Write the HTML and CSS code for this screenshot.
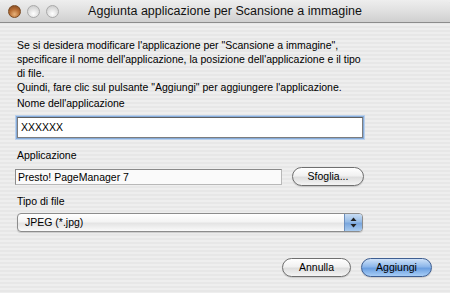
FILE: index.html
```html
<!DOCTYPE html>
<html lang="it">
<head>
<meta charset="utf-8">
<title>Aggiunta applicazione per Scansione a immagine</title>
<link rel="stylesheet" href="styles.css">
</head>
<body>
<div class="window">
  <div class="titlebar">
    <div class="lights">
      <span class="light light-close"></span>
      <span class="light"></span>
      <span class="light"></span>
    </div>
    <div class="title">Aggiunta applicazione per Scansione a immagine</div>
    <div></div>
  </div>
  <div class="content">
    <p class="intro">Se si desidera modificare l'applicazione per "Scansione a immagine",<br>specificare il nome dell'applicazione, la posizione dell'applicazione e il tipo<br>di file.<br>Quindi, fare clic sul pulsante "Aggiungi" per aggiungere l'applicazione.</p>

    <div class="label label-name">Nome dell'applicazione</div>
    <div class="textfield">XXXXXX</div>

    <div class="label label-app">Applicazione</div>
    <div class="app-row">
      <div class="pathfield">Presto! PageManager 7</div>
      <div class="btn btn-browse">Sfoglia...</div>
    </div>

    <div class="label label-type">Tipo di file</div>
    <div class="popup">
      <span class="popup-text">JPEG (*.jpg)</span>
      <span class="popup-arrows">
        <svg width="7" height="11" viewBox="0 0 7 11"><path d="M3.5 0.5 L6.5 4 L0.5 4 Z" fill="#222"/><path d="M3.5 10.5 L6.5 7 L0.5 7 Z" fill="#222"/></svg>
      </span>
    </div>

    <div class="actions">
      <div class="btn btn-cancel">Annulla</div>
      <div class="btn btn-default">Aggiungi</div>
    </div>
  </div>
</div>
</body>
</html>
```

FILE: styles.css
```css
html, body {
  margin: 0;
  padding: 0;
}
body {
  width: 450px;
  height: 293px;
  overflow: hidden;
  font-family: "Liberation Sans", Arial, sans-serif;
  color: #000;
}
.window {
  width: 450px;
  height: 293px;
  display: flex;
  flex-direction: column;
  background: repeating-linear-gradient(to bottom, #eeeeee 0, #eeeeee 2px, #e7e7e7 2px, #e7e7e7 4px);
}
.titlebar {
  height: 22px;
  flex: none;
  display: grid;
  grid-template-columns: 1fr auto 1fr;
  align-items: center;
  background: linear-gradient(to bottom, #eeeeee 0%, #e0e0e0 50%, #cfcfcf 100%);
  border-bottom: 1px solid #8c8c8c;
  border-top-right-radius: 5px;
  border-top-left-radius: 5px;
}
.lights {
  display: flex;
  gap: 6px;
  padding-left: 8px;
}
.light {
  width: 11px;
  height: 11px;
  border-radius: 50%;
  border: 1px solid #a9a9a9;
  background: radial-gradient(circle at 50% 70%, #ffffff 0%, #e4e4e4 45%, #c4c4c4 100%);
}
.light-close {
  border-color: #7a4a22;
  background: radial-gradient(circle at 50% 75%, #e8b27a 0%, #b86e34 50%, #7a4420 100%);
}
.title {
  font-size: 12.5px;
  color: #111;
  white-space: nowrap;
}
.content {
  flex: 1;
  display: flex;
  flex-direction: column;
  padding: 15px 18px 0 17px;
}
.intro {
  margin: 0;
  font-size: 10.5px;
  line-height: 14px;
}
.label {
  font-size: 10.5px;
  line-height: 14px;
}
.label-name { margin-top: 2px; }
.textfield {
  margin-top: 7px;
  width: 346px;
  height: 21px;
  box-sizing: border-box;
  border: 1px solid #7d7d7d;
  border-top-color: #5f5f5f;
  background: #fff;
  box-shadow: 0 0 0 1px #86abd9, 0 0 0 2px #b9d0ec;
  font-size: 10.5px;
  line-height: 19px;
  padding-left: 3px;
}
.label-app { margin-top: 10px; }
.app-row {
  margin-top: 5px;
  display: flex;
  align-items: center;
  gap: 10px;
}
.pathfield {
  width: 267px;
  height: 16px;
  margin-left: -2px;
  box-sizing: border-box;
  border: 1px solid #8a8a8a;
  border-right-color: #b8b8b8;
  border-bottom-color: #b8b8b8;
  background: #fafafa;
  font-size: 10.5px;
  line-height: 14px;
  padding-left: 2px;
}
.btn {
  box-sizing: border-box;
  height: 19px;
  border-radius: 10px;
  border: 1px solid #6f6f6f;
  background: linear-gradient(to bottom, #ffffff 0%, #f1f1f1 45%, #dedede 55%, #f4f4f4 100%);
  font-size: 10.5px;
  line-height: 17px;
  text-align: center;
  box-shadow: 0 1px 1px rgba(0,0,0,0.15);
}
.btn-browse { width: 72px; }
.label-type { margin-top: 8px; }
.popup {
  margin-top: 5px;
  width: 346px;
  height: 19px;
  box-sizing: border-box;
  border: 1px solid #8c8c8c;
  border-radius: 4px;
  display: flex;
  overflow: hidden;
  background: linear-gradient(to bottom, #ffffff 0%, #f4f4f4 45%, #e4e4e4 55%, #fafafa 100%);
  box-shadow: 0 1px 1px rgba(0,0,0,0.15);
}
.popup-text {
  flex: 1;
  font-size: 10.5px;
  line-height: 17px;
  padding-left: 7px;
}
.popup-arrows {
  width: 17px;
  display: flex;
  align-items: center;
  justify-content: center;
  border-left: 1px solid #6d8fbd;
  background: linear-gradient(to bottom, #c8dcf3 0%, #97bce6 45%, #7aa6dd 55%, #a9cbef 100%);
}
.actions {
  margin-top: auto;
  margin-bottom: 16px;
  display: flex;
  justify-content: flex-end;
  gap: 10px;
}
.btn-cancel { width: 69px; }
.btn-default {
  width: 71px;
  border-color: #3e5e91;
  background: linear-gradient(to bottom, #cfe2f8 0%, #8db7ea 45%, #6b9fe0 55%, #a7cdf6 100%);
}
```
